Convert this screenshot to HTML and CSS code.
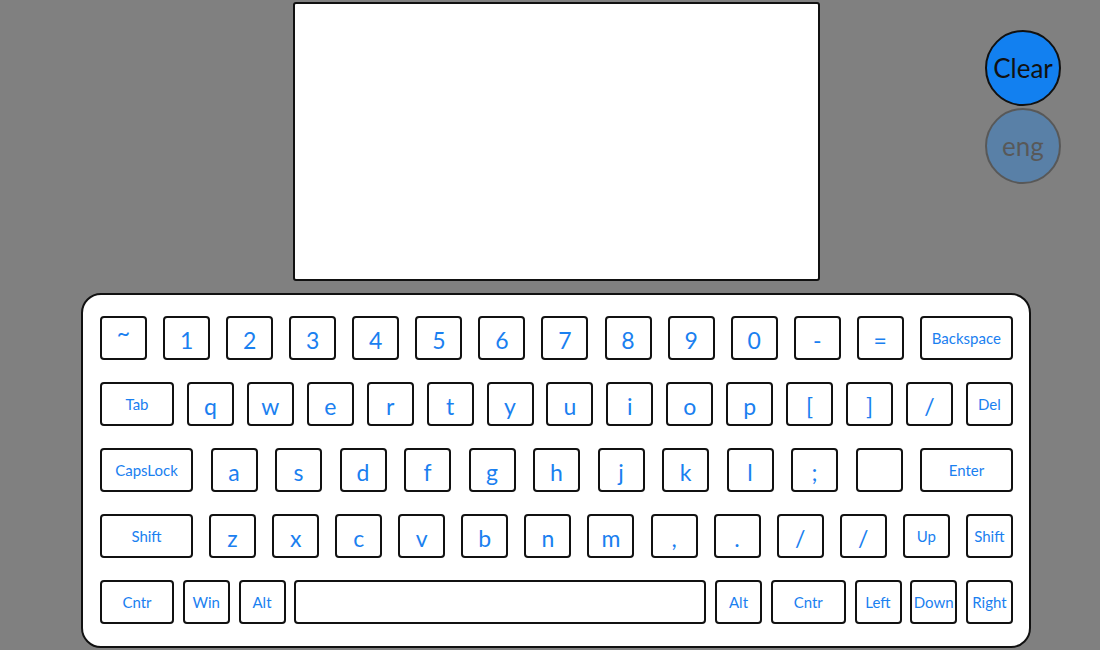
FILE: index.html
```html
<!DOCTYPE html>
<html>
<head>
<meta charset="utf-8">
<link rel="stylesheet" href="styles.css">
</head>
<body>
<div class="page">
  <div class="display"></div>
  <div class="keyboard">
    <div class="row">
      <div class="key tilde">~</div><div class="key">1</div><div class="key">2</div><div class="key">3</div><div class="key">4</div><div class="key">5</div><div class="key">6</div><div class="key">7</div><div class="key">8</div><div class="key">9</div><div class="key">0</div><div class="key">-</div><div class="key">=</div><div class="key wide word">Backspace</div>
    </div>
    <div class="row">
      <div class="key mid word">Tab</div><div class="key">q</div><div class="key">w</div><div class="key">e</div><div class="key">r</div><div class="key">t</div><div class="key">y</div><div class="key">u</div><div class="key">i</div><div class="key">o</div><div class="key">p</div><div class="key">[</div><div class="key">]</div><div class="key">/</div><div class="key word">Del</div>
    </div>
    <div class="row">
      <div class="key wide word">CapsLock</div><div class="key">a</div><div class="key">s</div><div class="key">d</div><div class="key">f</div><div class="key">g</div><div class="key">h</div><div class="key">j</div><div class="key">k</div><div class="key">l</div><div class="key">;</div><div class="key"></div><div class="key wide word">Enter</div>
    </div>
    <div class="row">
      <div class="key wide word">Shift</div><div class="key">z</div><div class="key">x</div><div class="key">c</div><div class="key">v</div><div class="key">b</div><div class="key">n</div><div class="key">m</div><div class="key">,</div><div class="key">.</div><div class="key">/</div><div class="key">/</div><div class="key word">Up</div><div class="key word">Shift</div>
    </div>
    <div class="row">
      <div class="key mid word">Cntr</div><div class="key word">Win</div><div class="key word">Alt</div><div class="key space"></div><div class="key word">Alt</div><div class="key mid2 word">Cntr</div><div class="key word">Left</div><div class="key word">Down</div><div class="key word">Right</div>
    </div>
  </div>
  <button class="round clear">Clear</button>
  <button class="round eng">eng</button>
</div>
</body>
</html>
```
FILE: styles.css
```css
html, body {
  margin: 0;
  padding: 0;
  background: #808080;
  width: 1100px;
  height: 650px;
  overflow: hidden;
  font-family: "Lato", "Open Sans", sans-serif;
}
.page {
  position: relative;
  padding: 2px 0 0 81px;
}
.display {
  margin-left: 212px;
  width: 527px;
  height: 279px;
  box-sizing: border-box;
  background: #fff;
  border: 2px solid #111;
  border-radius: 3px;
}
.keyboard {
  margin-top: 12px;
  width: 950px;
  height: 355px;
  box-sizing: border-box;
  background: #fff;
  border: 2px solid #111;
  border-radius: 20px;
  padding: 21px 16px 0 17px;
  display: flex;
  flex-direction: column;
  gap: 22px;
}
.row {
  display: flex;
  justify-content: space-between;
  height: 44px;
}
.key {
  width: 47px;
  height: 44px;
  box-sizing: border-box;
  border: 2px solid #111;
  border-radius: 4px;
  display: flex;
  align-items: center;
  justify-content: center;
  color: #1a80f0;
  font-size: 23px;
  padding-top: 3px;
}
.key.tilde {
  padding-top: 0;
  padding-bottom: 12px;
}
.key.word {
  font-size: 15px;
  padding-top: 0;
}
.key.wide { width: 93px; }
.key.mid { width: 74px; }
.key.mid2 { width: 75px; }
.key.space { width: 412px; }
.round {
  position: absolute;
  left: 985px;
  width: 76px;
  height: 76px;
  border-radius: 50%;
  box-sizing: border-box;
  border: 2px solid #111;
  background: #1280f0;
  color: #111;
  font-family: "Lato", "Open Sans", sans-serif;
  font-size: 26px;
  padding: 0;
  display: flex;
  align-items: center;
  justify-content: center;
}
.clear { top: 30px; }
.eng { top: 108px; opacity: 0.35; }
```
